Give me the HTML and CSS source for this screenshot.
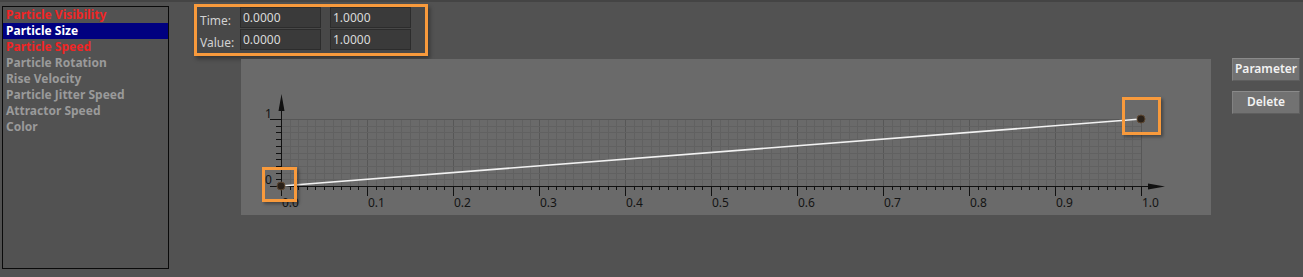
FILE: index.html
```html
<html>
    <head>
        <title>Particle Curves</title>
        <link rel="stylesheet" href="styles.css">
    </head>

    <body>
        <div class="editor">
            <div class="attrList unselectable">
                <div class="attrItem keyed">Particle Visibility</div>
                <div class="attrItem selected">Particle Size</div>
                <div class="attrItem keyed">Particle Speed</div>
                <div class="attrItem">Particle Rotation</div>
                <div class="attrItem">Rise Velocity</div>
                <div class="attrItem">Particle Jitter Speed</div>
                <div class="attrItem">Attractor Speed</div>
                <div class="attrItem">Color</div>
            </div>

            <div class="sectionCenter">
                <div class="rangePanel">
                    <span class="rangeLabel">Time:</span>
                    <div class="field">0.0000</div>
                    <div class="field">1.0000</div>
                    <span class="rangeLabel">Value:</span>
                    <div class="field">0.0000</div>
                    <div class="field">1.0000</div>
                </div>

                <div class="graphContainer">
                    <svg id="graph" width="970" height="156"></svg>
                    <div class="marker markerStart"></div>
                    <div class="marker markerEnd"></div>
                </div>
            </div>

            <div class="sectionButtons">
                <div class="toolButton">Parameter</div>
                <div class="toolButton">Delete</div>
            </div>
        </div>

        <script src="graph.js"></script>
    </body>
</html>
```

FILE: styles.css
```css
body {
    margin: 0;
    background-color: #525252;
    border-top: 2px solid #444444;
    font-family: "Noto Sans", "Open Sans", sans-serif;
    font-size: 12px;
}

.editor {
    display: flex;
    align-items: flex-start;
}

.attrList {
    margin: 4px 0 0 2px;
    width: 165px;
    height: 261px;
    border: 1px solid #0a0a0a;
    font-weight: bold;
    color: #9a9a9a;
}

.attrItem {
    height: 16px;
    line-height: 16px;
    padding-left: 3px;
    white-space: nowrap;
}

.attrItem.keyed {
    color: #f02525;
}

.attrItem.selected {
    background-color: #000080;
    color: #ffffff;
}

.sectionCenter {
    margin: 2px 0 0 25px;
}

.rangePanel {
    display: grid;
    grid-template-columns: 31px 81px 81px;
    column-gap: 9px;
    row-gap: 1px;
    width: 211px;
    padding: 0 14px 3px 3px;
    border: 3px solid #f89a3c;
    background-color: #484848;
    box-shadow: 2px 3px 4px rgba(0, 0, 0, 0.35);
}

.rangeLabel {
    color: #d2d2d2;
    line-height: 21px;
    padding-top: 3px;
    height: 18px;
    white-space: nowrap;
}

.field {
    height: 19px;
    line-height: 19px;
    padding-left: 2px;
    background-color: #3a3a3a;
    border: 1px solid #2c2c2c;
    color: #dadada;
}

.graphContainer {
    position: relative;
    margin: 3px 0 0 47px;
    width: 970px;
    height: 156px;
    background-color: #6a6a6a;
}

#graph {
    display: block;
}

#graph text {
    font-family: "Noto Sans", "Open Sans", sans-serif;
    font-size: 12px;
    fill: #141414;
}

.marker {
    position: absolute;
    border: 3px solid #f89a3c;
    box-shadow: 2px 2px 3px rgba(0, 0, 0, 0.35);
}

.markerStart {
    left: 21px;
    top: 108px;
    width: 29px;
    height: 29px;
}

.markerEnd {
    left: 881px;
    top: 38px;
    width: 33px;
    height: 32px;
}

.sectionButtons {
    display: flex;
    flex-direction: column;
    gap: 10px;
    margin: 56px 0 0 21px;
}

.toolButton {
    width: 66px;
    height: 21px;
    line-height: 20px;
    text-align: center;
    background-color: #727272;
    border: 1px solid #5e5e5e;
    border-top-color: #8a8a8a;
    border-left-color: #828282;
    color: #f2f2f2;
    font-weight: 600;
}

.unselectable {
    -webkit-user-select: none;
    user-select: none;
}
```

FILE: graph.js
```js
var svg = document.getElementById("graph");
var ns = "http://www.w3.org/2000/svg";

// origin of the curve and size of one unit
var ox = 40;
var oy = 127;
var unitX = 860;
var unitY = 67;

function add(tag, attrs, text) {
    var el = document.createElementNS(ns, tag);
    for (var k in attrs) {
        el.setAttribute(k, attrs[k]);
    }
    if (text) {
        el.textContent = text;
    }
    svg.appendChild(el);
    return el;
}

function line(x1, y1, x2, y2, color) {
    add("line", { x1: x1, y1: y1, x2: x2, y2: y2, stroke: color, "stroke-width": 1 });
}

// grid
for (var i = 0; i <= 100; i++) {
    var gx = Math.round(ox + i * unitX / 100) + 0.5;
    line(gx, oy - unitY, gx, oy, i % 10 == 0 ? "#575757" : "#616161");
}
for (var j = 0; j <= 10; j++) {
    var gy = Math.round(oy - j * unitY / 10) + 0.5;
    line(ox, gy, ox + unitX, gy, j == 10 ? "#575757" : "#616161");
}

// axes
line(ox + 0.5, 50, ox + 0.5, oy + 10, "#111");
line(ox - 11, oy + 0.5, ox + unitX + 8, oy + 0.5, "#111");
add("polygon", { points: "40.5,35 37.5,52 43.5,52", fill: "#111" });
add("polygon", { points: "924,127.5 907,124.5 907,130.5", fill: "#111" });

// ticks
for (var i = 0; i <= 100; i++) {
    var tx = Math.round(ox + i * unitX / 100) + 0.5;
    line(tx, oy, tx, oy + (i % 10 == 0 ? 10 : 4), "#111");
}
for (var j = 1; j <= 10; j++) {
    var ty = Math.round(oy - j * unitY / 10) + 0.5;
    line(ox - (j == 10 ? 11 : 5), ty, ox, ty, "#111");
}

// labels
for (var k = 0; k <= 10; k++) {
    add("text", { x: ox + k * 86 + 1, y: 148 }, (k / 10).toFixed(1));
}
add("text", { x: 24, y: 59 }, "1");
add("text", { x: 24, y: 125 }, "0");

// curve and keys
var keys = [[0, 0], [1, 1]];
var pts = keys.map(function (p) {
    return (ox + p[0] * unitX) + "," + (oy - p[1] * unitY);
});
add("polyline", { points: pts.join(" "), fill: "none", stroke: "#f2f2f2", "stroke-width": 1.6 });
keys.forEach(function (p) {
    add("circle", { cx: ox + p[0] * unitX, cy: oy - p[1] * unitY, r: 4, fill: "#2a2119", stroke: "#5c4731", "stroke-width": 1 });
});
```
